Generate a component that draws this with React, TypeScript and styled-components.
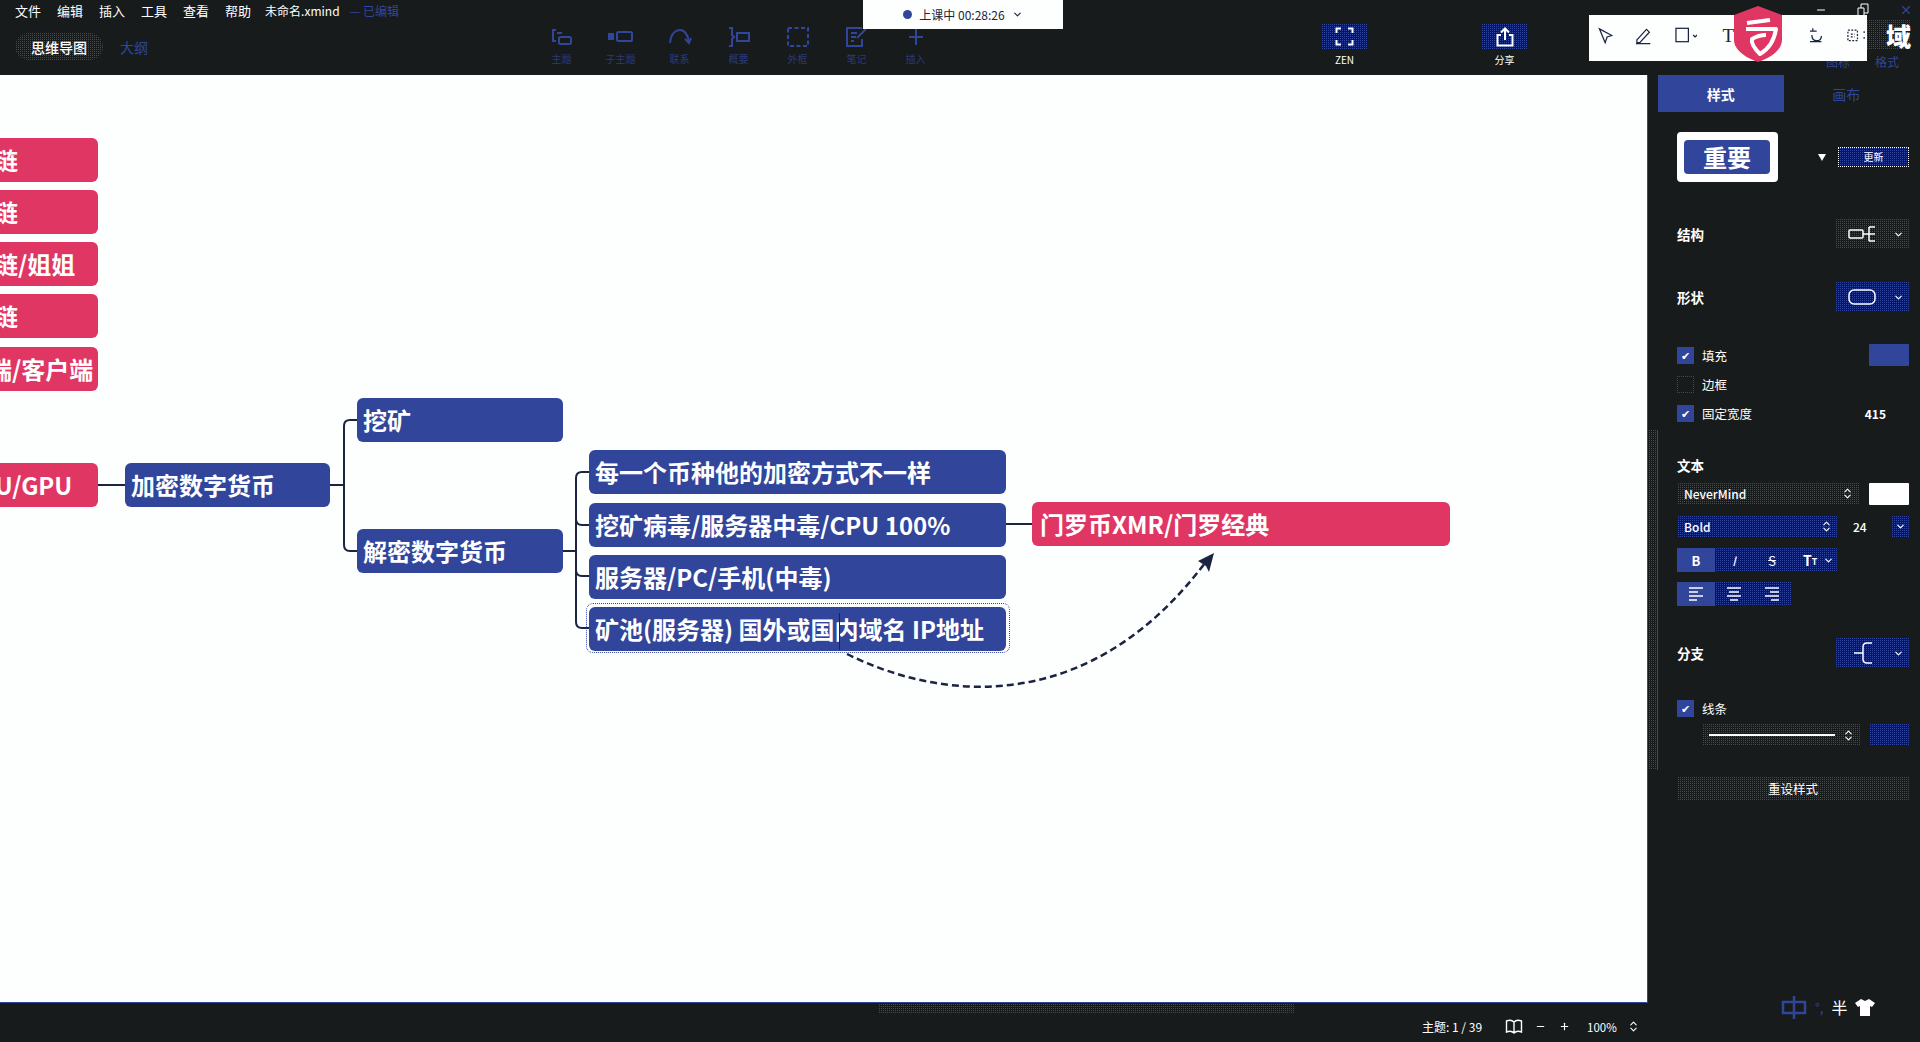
import React from "react";
import styled, { createGlobalStyle, css } from "styled-components";
import { ChevronDown, ChevronsUpDown, X, Minus, Plus } from "lucide-react";

const DARK = "#171b1c";
const BLUE = "#31459b";
const RED = "#e03663";
const LINE = "#1b2440";

const dither = css`
  background: conic-gradient(${BLUE} 25%, ${DARK} 0) 0 0 / 2px 2px;
`;

const GlobalStyle = createGlobalStyle`
  html, body {
    margin: 0;
    padding: 0;
    background: ${DARK};
    overflow: hidden;
  }
  * {
    box-sizing: border-box;
  }
`;

const leftNodes = [
  { y: 63, text: "区块链" },
  { y: 115, text: "区块链" },
  { y: 167, text: "区块链/姐姐" },
  { y: 219, text: "区块链" },
  { y: 272, text: "服务端/客户端", indent: -2 },
  { y: 388, text: "CPU/GPU", indent: 23 },
];

const blueNodes = [
  { x: 125, y: 388, w: 205, text: "加密数字货币" },
  { x: 357, y: 323, w: 206, text: "挖矿" },
  { x: 357, y: 454, w: 206, text: "解密数字货币" },
  { x: 589, y: 375, w: 417, text: "每一个币种他的加密方式不一样" },
  { x: 589, y: 428, w: 417, text: "挖矿病毒/服务器中毒/CPU 100%" },
  { x: 589, y: 480, w: 417, text: "服务器/PC/手机(中毒)" },
  { x: 589, y: 532, w: 417, text: "矿池(服务器) 国外或国内域名 IP地址" },
];

const menus = ["文件", "编辑", "插入", "工具", "查看", "帮助"];

export default function App() {
  return (
    <>
      <GlobalStyle />
      <Page>
        <TopBar>
          <LeftCol>
            <MenuRow>
              {menus.map((m) => (
                <MenuItem key={m}>{m}</MenuItem>
              ))}
              <FileName>未命名.xmind</FileName>
              <Saved>— 已编辑</Saved>
            </MenuRow>
            <TabRow>
              <ViewPill>思维导图</ViewPill>
              <ViewLink>大纲</ViewLink>
            </TabRow>
          </LeftCol>
          <Tools>
            <Tool>
              <svg width="22" height="18" viewBox="0 0 22 18" fill="none" stroke={BLUE} strokeWidth="2">
                <path d="M5 2H2v11h3" />
                <rect x="8" y="9" width="12" height="7" rx="1.5" />
                <path d="M6 5h5" />
              </svg>
              <ToolLabel>主题</ToolLabel>
            </Tool>
            <Tool>
              <svg width="26" height="18" viewBox="0 0 26 18" fill="none" stroke={BLUE} strokeWidth="2">
                <rect x="1" y="6" width="4" height="5" fill={BLUE} />
                <rect x="9" y="4" width="15" height="9" rx="1.5" />
              </svg>
              <ToolLabel>子主题</ToolLabel>
            </Tool>
            <Tool>
              <svg width="24" height="18" viewBox="0 0 24 18" fill="none" stroke={BLUE} strokeWidth="2">
                <path d="M2 15C3 5 8 2 12 2s8 4 9 12" />
                <path d="M17 11l4 4 2-5" />
              </svg>
              <ToolLabel>联系</ToolLabel>
            </Tool>
            <Tool>
              <svg width="22" height="20" viewBox="0 0 22 20" fill="none" stroke={BLUE} strokeWidth="2">
                <path d="M1 1h3v7l2 2-2 2v7H1" />
                <rect x="9" y="6" width="12" height="8" />
              </svg>
              <ToolLabel>概要</ToolLabel>
            </Tool>
            <Tool>
              <svg width="22" height="20" viewBox="0 0 22 20" fill="none" stroke={BLUE} strokeWidth="2" strokeDasharray="4 2.5">
                <rect x="1" y="1" width="20" height="18" />
              </svg>
              <ToolLabel>外框</ToolLabel>
            </Tool>
            <Tool>
              <svg width="22" height="20" viewBox="0 0 22 20" fill="none" stroke={BLUE} strokeWidth="2">
                <path d="M16 1H1v18h15v-7" />
                <path d="M5 6h6M5 10h5M5 14h3" />
                <path d="M11 11l9-9" />
              </svg>
              <ToolLabel>笔记</ToolLabel>
            </Tool>
            <Tool>
              <svg width="18" height="18" viewBox="0 0 18 18" fill="none" stroke={BLUE} strokeWidth="2">
                <path d="M9 1v16M2 9h14" />
              </svg>
              <ToolLabel>插入</ToolLabel>
            </Tool>
          </Tools>
          <ZenButton>
            <ZenIcon>
              <svg width="19" height="19" viewBox="0 0 19 19" fill="none" stroke="#fff" strokeWidth="2">
                <path d="M6 1.5H1.500V6M13 1.500h4.500V6M6 17.500H1.500V13M13 17.500h4.500V13" />
              </svg>
            </ZenIcon>
            <ZenLabel>ZEN</ZenLabel>
          </ZenButton>
          <ShareButton>
            <ZenIcon>
              <svg width="18" height="20" viewBox="0 0 18 20" fill="none" stroke="#fff" strokeWidth="2">
                <path d="M5 8H1.500v10.500h15V8H13" />
                <path d="M9 13V2M5 5.500L9 1.500l4 4" />
              </svg>
            </ZenIcon>
            <ZenLabel>分享</ZenLabel>
          </ShareButton>
          <TopRight>
            <WinControls>
              <Minus size={12} color="#fff" />
              <svg width="12" height="14" viewBox="0 0 12 14" fill="none" stroke="#fff" strokeWidth="1">
                <path d="M1 13V5h6v8M4 5V1h7v9H7" />
              </svg>
              <X size={14} color={BLUE} />
            </WinControls>
            <TitlePatch>域</TitlePatch>
            <MiniTabs>
              <span>图标</span>
              <span>格式</span>
            </MiniTabs>
          </TopRight>
        </TopBar>

        <TimerBanner>
          <TimerDot />
          上课中 00:28:26
          <ChevronDown size={11} strokeWidth={2.5} color={LINE} />
        </TimerBanner>

        <ScreenTool>
          <svg width="16" height="18" viewBox="0 0 16 18" fill="none" stroke={LINE} strokeWidth="1.300">
            <path d="M1.500 1.500l13 7-5 1.500-2 6z" />
          </svg>
          <svg width="18" height="18" viewBox="0 0 18 18" fill="none" stroke={LINE} strokeWidth="1.300">
            <path d="M2 13L12 2l3 3L5 16H2zM1 17h15" />
          </svg>
          <svg width="24" height="16" viewBox="0 0 24 16" fill="none" stroke={LINE} strokeWidth="1.300">
            <rect x="1" y="1" width="13" height="14" />
            <path d="M19 8l2 2 2-2" />
          </svg>
          <ToolT>T</ToolT>
          <ToolGap />
          <svg width="16" height="16" viewBox="0 0 16 16" fill="none" stroke={LINE} strokeWidth="1.300">
            <path d="M1 4h7M4 1v3M3 8c0 4 2 6 5 6s5-2 5-5M1 15h12" />
          </svg>
          <svg width="22" height="16" viewBox="0 0 22 16" fill="none" stroke={LINE} strokeWidth="1.300" strokeDasharray="2 1.500">
            <rect x="2" y="3" width="10" height="11" />
            <path d="M5 7h4M5 10h4M19 4v2M19 10v2" />
          </svg>
        </ScreenTool>

        <ShieldLogo width="48" height="56" viewBox="0 0 48 56">
          <path d="M24 0L48 9V34C48 44 36 52 24 56C12 52 0 44 0 34V9Z" fill={RED} />
          <path
            d="M13 17L36 14M12 23H42C40 36 33 44 26 48C20 42 17 37 18 33C23 30 28 29 32 29"
            fill="none"
            stroke="#fff"
            strokeWidth="4"
            strokeLinejoin="round"
          />
        </ShieldLogo>

        <Main>
          <Canvas>
            <Connectors width="1648" height="928" viewBox="0 0 1648 928" fill="none">
              <g stroke={LINE} strokeWidth="2">
                <path d="M98 410H125M330 410H344" />
                <path d="M357 345H350Q344 345 344 351V470Q344 476 350 476H357" />
                <path d="M563 476H576" />
                <path d="M589 397H582Q576 397 576 403V547Q576 553 582 553H589" />
                <path d="M576 444Q576 450 582 450H589M576 495Q576 501 582 501H589" />
                <path d="M1006 449H1032" />
                <path
                  d="M847 579C950 630 1095 637 1208 484"
                  strokeWidth="2.500"
                  strokeDasharray="7 4"
                />
              </g>
              <path d="M1214 478L1198 486L1206 491L1209 497Z" fill={LINE} />
            </Connectors>

            {leftNodes.map((n) => (
              <MapNode key={n.y} $x={-60} $y={n.y} $w={158} $color={RED} $indent={n.indent}>
                {n.text}
              </MapNode>
            ))}
            {blueNodes.map((n) => (
              <MapNode key={n.text} $x={n.x} $y={n.y} $w={n.w} $color={BLUE}>
                {n.text}
              </MapNode>
            ))}
            <MapNode $x={1032} $y={427} $w={418} $color={RED} $indent={8}>
              门罗币XMR/门罗经典
            </MapNode>
            <Selection />
            <Caret />
          </Canvas>

          <Panel>
            <PanelScroll />
            <PanelTabs>
              <PanelTab $active>样式</PanelTab>
              <PanelTab>画布</PanelTab>
            </PanelTabs>

            <PreviewRow>
              <PreviewCard>
                <PreviewChip>重要</PreviewChip>
              </PreviewCard>
              <PreviewArrow />
              <UpdateButton>更新</UpdateButton>
            </PreviewRow>

            <SectionRow $mt={37}>
              <SectionTitle>结构</SectionTitle>
              <Dropdown>
                <svg width="28" height="18" viewBox="0 0 28 18" fill="none" stroke="#fff" strokeWidth="1.500">
                  <rect x="1" y="5" width="14" height="8" rx="1" />
                  <path d="M15 9h6M21 2v14M21 2h6M21 9h6M21 16h6" />
                </svg>
                <ChevronDown size={11} strokeWidth={2.5} color="#fff" />
              </Dropdown>
            </SectionRow>

            <SectionRow $mt={33}>
              <SectionTitle>形状</SectionTitle>
              <Dropdown>
                <svg width="28" height="18" viewBox="0 0 28 18" fill="none" stroke="#fff" strokeWidth="1.500">
                  <rect x="1" y="2" width="26" height="14" rx="5" />
                </svg>
                <ChevronDown size={11} strokeWidth={2.5} color="#fff" />
              </Dropdown>
            </SectionRow>

            <CheckRow $mt={32}>
              <CheckBox $checked>✔</CheckBox>
              <CheckLabel>填充</CheckLabel>
              <Swatch $color={BLUE} />
            </CheckRow>
            <CheckRow $mt={7}>
              <CheckBox />
              <CheckLabel>边框</CheckLabel>
            </CheckRow>
            <CheckRow $mt={7}>
              <CheckBox $checked>✔</CheckBox>
              <CheckLabel>固定宽度</CheckLabel>
              <WidthValue>415</WidthValue>
            </CheckRow>

            <TextTitle>文本</TextTitle>
            <FieldRow $mt={8}>
              <SelectBox $w={182}>
                NeverMind
                <ChevronsUpDown size={13} strokeWidth={2} color="#fff" />
              </SelectBox>
              <Swatch $color="#ffffff" />
            </FieldRow>
            <FieldRow $mt={12}>
              <SelectBox $w={161}>
                Bold
                <ChevronsUpDown size={13} strokeWidth={2} color="#fff" />
              </SelectBox>
              <SizeValue>24</SizeValue>
              <SizeArrow>
                <ChevronDown size={11} strokeWidth={2.5} color="#fff" />
              </SizeArrow>
            </FieldRow>
            <ButtonRow $mt={11} $w={161}>
              <FormatButton $active>
                <b>B</b>
              </FormatButton>
              <FormatButton>
                <i>I</i>
              </FormatButton>
              <FormatButton>
                <s>S</s>
              </FormatButton>
              <CaseButton>
                <b>T</b>
                <small>T</small>
                <ChevronDown size={11} strokeWidth={2.5} color="#fff" />
              </CaseButton>
            </ButtonRow>
            <ButtonRow $mt={10} $w={114}>
              <FormatButton $active>
                <AlignIcon d="M1 2h14M1 6h9M1 10h14M1 14h8" />
              </FormatButton>
              <FormatButton>
                <AlignIcon d="M1 2h14M3 6h10M1 10h14M4 14h8" />
              </FormatButton>
              <FormatButton>
                <AlignIcon d="M1 2h14M6 6h9M1 10h14M7 14h8" />
              </FormatButton>
            </ButtonRow>

            <SectionRow $mt={32}>
              <SectionTitle>分支</SectionTitle>
              <Dropdown>
                <svg width="28" height="22" viewBox="0 0 28 22" fill="none" stroke="#fff" strokeWidth="1.500">
                  <path d="M6 11h9M24 1h-5q-4 0-4 4v12q0 4 4 4h5" />
                </svg>
                <ChevronDown size={11} strokeWidth={2.5} color="#fff" />
              </Dropdown>
            </SectionRow>

            <CheckRow $mt={32} $h={16}>
              <CheckBox $checked>✔</CheckBox>
              <CheckLabel>线条</CheckLabel>
            </CheckRow>
            <LineRow>
              <LineSelect>
                <LineSample />
                <ChevronsUpDown size={13} strokeWidth={2} color="#fff" />
              </LineSelect>
              <LineColor />
            </LineRow>
            <ResetButton>重设样式</ResetButton>
          </Panel>
        </Main>

        <StatusBar>
          <HScroll />
          <TopicCount>主题: 1 / 39</TopicCount>
          <svg width="18" height="15" viewBox="0 0 18 15" fill="none" stroke="#fff" strokeWidth="1.400">
            <path d="M9 3C7 1 4 1 1.500 2v11c2.500-1 5.500-1 7.500 1 2-2 5-2 7.500-1V2C14 1 11 1 9 3zM9 3v11" />
          </svg>
          <ZoomButton>
            <Minus size={11} strokeWidth={2.5} color="#fff" />
          </ZoomButton>
          <ZoomButton>
            <Plus size={11} strokeWidth={2.5} color="#fff" />
          </ZoomButton>
          <ZoomValue>100%</ZoomValue>
          <ChevronsUpDown size={13} strokeWidth={2} color="#fff" />
        </StatusBar>

        <ImeWidget>
          <ImeBox>
            <svg width="26" height="24" viewBox="0 0 26 24" fill="none" stroke={BLUE} strokeWidth="2.500">
              <rect x="2" y="7" width="22" height="11" />
              <path d="M13 1v23" />
            </svg>
          </ImeBox>
          <ImeDot>°,</ImeDot>
          <ImeHalf>半</ImeHalf>
          <svg width="20" height="18" viewBox="0 0 20 18" fill="#fff">
            <path d="M6 1l4 2 4-2 6 4-3 4-2-1v10H5V8L3 9 0 5z" />
          </svg>
        </ImeWidget>
      </Page>
    </>
  );
}

function AlignIcon({ d }: { d: string }) {
  return (
    <svg width="16" height="16" viewBox="0 0 16 16" fill="none" stroke="#fff" strokeWidth="1.500">
      <path d={d} />
    </svg>
  );
}

//Styles
const Page = styled.div`
  position: relative;
  width: 1920px;
  height: 1042px;
  overflow: hidden;
  display: flex;
  flex-direction: column;
  background: ${DARK};
  color: #fff;
  font-family: "Noto Sans CJK SC", "Noto Sans", sans-serif;
`;

const TopBar = styled.header`
  height: 75px;
  flex: none;
  display: flex;
`;

const LeftCol = styled.div`
  width: 532px;
  flex: none;
  display: flex;
  flex-direction: column;
`;

const MenuRow = styled.div`
  height: 20px;
  padding-left: 15px;
  display: flex;
  align-items: center;
  gap: 16px;
  font-size: 13px;
`;

const MenuItem = styled.span``;

const FileName = styled.span`
  font-size: 12px;
  margin-left: -2px;
`;

const Saved = styled.span`
  font-size: 12px;
  color: ${BLUE};
  margin-left: -6px;
`;

const TabRow = styled.div`
  margin-top: 13px;
  padding-left: 15px;
  display: flex;
  align-items: center;
  gap: 17px;
`;

const ViewPill = styled.div`
  width: 88px;
  height: 27px;
  border-radius: 14px;
  ${dither};
  display: flex;
  align-items: center;
  justify-content: center;
  font-size: 14px;
  font-weight: 500;
`;

const ViewLink = styled.div`
  font-size: 14px;
  color: ${BLUE};
`;

const Tools = styled.div`
  display: flex;
`;

const Tool = styled.div`
  width: 59px;
  padding-top: 27px;
  display: flex;
  flex-direction: column;
  align-items: center;
  height: 75px;
  & > svg {
    height: 20px;
  }
`;

const ToolLabel = styled.span`
  margin-top: 5px;
  font-size: 10px;
  line-height: 14px;
  color: ${BLUE};
  opacity: 0.75;
`;

const ZenButton = styled.div`
  margin-left: 376px;
  width: 47px;
  padding-top: 24px;
  display: flex;
  flex-direction: column;
  align-items: center;
`;

const ShareButton = styled(ZenButton)`
  margin-left: 113px;
`;

const ZenIcon = styled.div`
  width: 47px;
  height: 25px;
  ${dither};
  display: flex;
  align-items: center;
  justify-content: center;
`;

const ZenLabel = styled.span`
  margin-top: 4px;
  font-size: 10px;
  line-height: 14px;
`;

const TopRight = styled.div`
  margin-left: auto;
  width: 110px;
  display: flex;
  flex-direction: column;
`;

const WinControls = styled.div`
  height: 20px;
  padding: 0 7px 0 0;
  display: flex;
  align-items: center;
  justify-content: flex-end;
  gap: 30px;
`;

const TitlePatch = styled.div`
  align-self: flex-end;
  width: 53px;
  height: 30px;
  margin-right: 9px;
  ${dither};
  font-size: 25px;
  font-weight: 900;
  line-height: 30px;
  text-align: right;
`;

const MiniTabs = styled.div`
  margin-top: 4px;
  padding-left: 16px;
  display: flex;
  gap: 25px;
  font-size: 12px;
  line-height: 16px;
  color: ${BLUE};
`;

const TimerBanner = styled.div`
  position: absolute;
  left: 863px;
  top: 0;
  width: 200px;
  height: 29px;
  background: #fdffff;
  color: ${LINE};
  font-size: 12px;
  display: flex;
  align-items: center;
  justify-content: center;
  gap: 7px;
`;

const TimerDot = styled.span`
  width: 9px;
  height: 9px;
  border-radius: 50%;
  background: ${BLUE};
`;

const ScreenTool = styled.div`
  position: absolute;
  left: 1589px;
  top: 15px;
  width: 278px;
  height: 46px;
  background: #fdffff;
  padding: 12px 0 0 9px;
  display: flex;
  align-items: flex-start;
  gap: 22px;
  z-index: 2;
`;

const ToolT = styled.span`
  margin-left: 3px;
  font-family: "Liberation Serif", serif;
  font-size: 19px;
  line-height: 18px;
  color: ${LINE};
`;

const ToolGap = styled.span`
  width: 32px;
`;

const ShieldLogo = styled.svg`
  position: absolute;
  left: 1734px;
  top: 6px;
  z-index: 3;
`;

const Main = styled.main`
  flex: 1;
  display: flex;
  min-height: 0;
`;

const Canvas = styled.div`
  position: relative;
  width: 1648px;
  flex: none;
  overflow: hidden;
  background: #fdffff;
  border-right: 1px solid ${BLUE};
  border-bottom: 1px solid ${BLUE};
`;

const Connectors = styled.svg`
  position: absolute;
  left: 0;
  top: 0;
`;

const MapNode = styled.div<{ $x: number; $y: number; $w: number; $color: string; $indent?: number }>`
  position: absolute;
  left: ${(p) => p.$x}px;
  top: ${(p) => p.$y}px;
  width: ${(p) => p.$w}px;
  height: 44px;
  padding-left: ${(p) => p.$indent ?? 6}px;
  border-radius: 6px;
  background: ${(p) => p.$color};
  color: #fff;
  font-size: 24px;
  font-weight: 700;
  line-height: 44px;
  white-space: nowrap;
`;

const Selection = styled.div`
  position: absolute;
  left: 586px;
  top: 528px;
  width: 424px;
  height: 50px;
  border: 1px dotted ${BLUE};
  border-radius: 7px;
`;

const Caret = styled.div`
  position: absolute;
  left: 839px;
  top: 538px;
  width: 1px;
  height: 37px;
  background: ${LINE};
`;

const Panel = styled.aside`
  position: relative;
  width: 272px;
  flex: none;
  padding: 0 11px 0 29px;
  display: flex;
  flex-direction: column;
`;

const PanelScroll = styled.div`
  position: absolute;
  left: 0;
  top: 355px;
  width: 10px;
  height: 340px;
  border-right: 1px solid ${BLUE};
  ${dither};
`;

const PanelTabs = styled.div`
  margin-left: -19px;
  height: 37px;
  display: flex;
`;

const PanelTab = styled.div<{ $active?: boolean }>`
  width: 135px;
  display: flex;
  align-items: center;
  justify-content: center;
  font-size: 14px;
  font-weight: ${(p) => (p.$active ? 700 : 400)};
  color: ${(p) => (p.$active ? "#fff" : BLUE)};
  background: ${(p) => (p.$active ? BLUE : "transparent")};
`;

const PreviewRow = styled.div`
  margin-top: 20px;
  height: 50px;
  display: flex;
  align-items: center;
`;

const PreviewCard = styled.div`
  width: 104px;
  height: 50px;
  padding: 8px 8px 8px 7px;
  background: #fff;
  border-radius: 4px;
`;

const PreviewChip = styled.div`
  height: 34px;
  border-radius: 4px;
  background: ${BLUE};
  font-size: 24px;
  font-weight: 700;
  line-height: 34px;
  text-align: center;
`;

const PreviewArrow = styled.span`
  margin-left: 40px;
  border-left: 4px solid transparent;
  border-right: 4px solid transparent;
  border-top: 7px solid #fff;
`;

const UpdateButton = styled.div`
  margin-left: 12px;
  width: 73px;
  height: 20px;
  border: 1px dotted #fff;
  ${dither};
  font-size: 10px;
  line-height: 18px;
  text-align: center;
`;

const SectionRow = styled.div<{ $mt: number }>`
  margin-top: ${(p) => p.$mt}px;
  height: 30px;
  display: flex;
  align-items: center;
  justify-content: space-between;
`;

const SectionTitle = styled.span`
  font-size: 13.500px;
  font-weight: 700;
`;

const Dropdown = styled.div`
  width: 74px;
  height: 30px;
  padding: 0 5px 0 13px;
  ${dither};
  display: flex;
  align-items: center;
  justify-content: space-between;
`;

const CheckRow = styled.div<{ $mt: number; $h?: number }>`
  margin-top: ${(p) => p.$mt}px;
  height: ${(p) => p.$h ?? 22}px;
  display: flex;
  align-items: center;
`;

const CheckBox = styled.span<{ $checked?: boolean }>`
  width: 17px;
  height: 17px;
  display: flex;
  align-items: center;
  justify-content: center;
  font-size: 11px;
  color: #fff;
  background: ${(p) => (p.$checked ? BLUE : "transparent")};
  border: ${(p) => (p.$checked ? "none" : `1px dotted ${BLUE}`)};
`;

const CheckLabel = styled.span`
  margin-left: 8px;
  font-size: 12.500px;
`;

const Swatch = styled.span<{ $color: string }>`
  margin-left: auto;
  width: 40px;
  height: 22px;
  border-radius: 1px;
  background: ${(p) => p.$color};
`;

const WidthValue = styled.span`
  margin-left: auto;
  margin-right: 23px;
  font-size: 12px;
  font-weight: 700;
`;

const TextTitle = styled(SectionTitle)`
  margin-top: 31px;
  height: 20px;
  line-height: 20px;
`;

const FieldRow = styled.div<{ $mt: number }>`
  margin-top: ${(p) => p.$mt}px;
  height: 21px;
  display: flex;
  align-items: center;
`;

const SelectBox = styled.div<{ $w: number }>`
  width: ${(p) => p.$w}px;
  height: 21px;
  padding: 0 5px 0 7px;
  ${dither};
  display: flex;
  align-items: center;
  justify-content: space-between;
  font-size: 12px;
  font-weight: 500;
`;

const SizeValue = styled.span`
  margin-left: 15px;
  font-size: 12px;
  font-weight: 500;
`;

const SizeArrow = styled.span`
  margin-left: auto;
  width: 18px;
  height: 21px;
  ${dither};
  display: flex;
  align-items: center;
  justify-content: center;
`;

const ButtonRow = styled.div<{ $mt: number; $w: number }>`
  margin-top: ${(p) => p.$mt}px;
  width: ${(p) => p.$w}px;
  height: 24px;
  ${dither};
  display: flex;
`;

const FormatButton = styled.span<{ $active?: boolean }>`
  width: 38px;
  height: 24px;
  display: flex;
  align-items: center;
  justify-content: center;
  font-size: 13px;
  background: ${(p) => (p.$active ? BLUE : "transparent")};
`;

const CaseButton = styled.span`
  flex: 1;
  padding-left: 12px;
  display: flex;
  align-items: center;
  font-size: 14px;
  small {
    font-size: 9px;
    font-weight: 700;
    margin: 3px 6px 0 0;
  }
`;

const LineRow = styled.div`
  margin-top: 8px;
  padding-left: 25px;
  height: 22px;
  display: flex;
  justify-content: space-between;
`;

const LineSelect = styled.div`
  width: 158px;
  padding: 0 5px 0 7px;
  ${dither};
  display: flex;
  align-items: center;
  justify-content: space-between;
`;

const LineSample = styled.span`
  width: 126px;
  height: 2px;
  background: #fff;
`;

const LineColor = styled.span`
  width: 40px;
  ${dither};
`;

const ResetButton = styled.div`
  margin-top: 31px;
  height: 23px;
  ${dither};
  font-size: 12.500px;
  line-height: 23px;
  text-align: center;
`;

const StatusBar = styled.footer`
  position: relative;
  height: 39px;
  flex: none;
  padding: 8px 0 0 1422px;
  display: flex;
  align-items: center;
  font-size: 12px;
`;

const HScroll = styled.div`
  position: absolute;
  left: 878px;
  top: 1px;
  width: 417px;
  height: 10px;
  ${dither};
`;

const TopicCount = styled.span`
  width: 83px;
  white-space: nowrap;
`;

const ZoomButton = styled.span`
  width: 14px;
  height: 14px;
  margin-left: 10px;
  display: flex;
  align-items: center;
  justify-content: center;
  &:first-of-type {
    margin-left: 16px;
  }
`;

const ZoomValue = styled.span`
  margin: 0 10px 0 16px;
  font-size: 11.500px;
`;

const ImeWidget = styled.div`
  position: absolute;
  left: 1781px;
  top: 995px;
  display: flex;
  align-items: center;
  gap: 8px;
`;

const ImeBox = styled.span`
  display: flex;
`;

const ImeDot = styled.span`
  font-size: 13px;
  color: ${BLUE};
`;

const ImeHalf = styled.span`
  font-size: 16px;
`;
